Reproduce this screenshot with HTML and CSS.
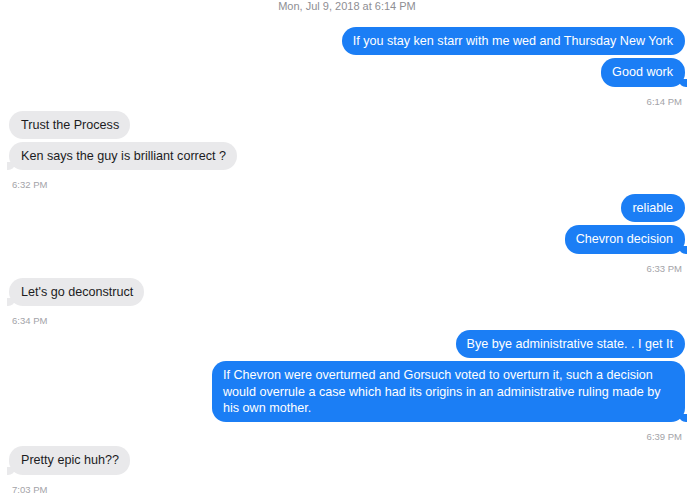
FILE: index.html
```html
<!DOCTYPE html>
<html>
<head>
<meta charset="utf-8">
<link rel="stylesheet" href="styles.css">
</head>
<body>
<div class="thread">
  <div class="date">Mon, Jul 9, 2018 at 6:14 PM</div>

  <div class="bubble sent">If you stay ken starr with me wed and Thursday New York</div>
  <div class="bubble sent tail">Good work</div>
  <div class="time sent-time">6:14 PM</div>

  <div class="bubble recv">Trust the Process</div>
  <div class="bubble recv tail">Ken says the guy is brilliant correct ?</div>
  <div class="time recv-time">6:32 PM</div>

  <div class="bubble sent">reliable</div>
  <div class="bubble sent tail">Chevron decision</div>
  <div class="time sent-time">6:33 PM</div>

  <div class="bubble recv tail">Let's go deconstruct</div>
  <div class="time recv-time">6:34 PM</div>

  <div class="bubble sent">Bye bye administrative state. . I get It</div>
  <div class="bubble sent tail">If Chevron were overturned and Gorsuch voted to overturn it, such a decision would overrule a case which had its origins in an administrative ruling made by his own mother.</div>
  <div class="time sent-time">6:39 PM</div>

  <div class="bubble recv tail">Pretty epic huh??</div>
  <div class="time recv-time">7:03 PM</div>
</div>
</body>
</html>
```

FILE: styles.css
```css
html, body {
  margin: 0;
  padding: 0;
  background: #ffffff;
}

body {
  font-family: "Liberation Sans", Arial, Helvetica, sans-serif;
  -webkit-font-smoothing: antialiased;
}

.thread {
  display: flex;
  flex-direction: column;
  gap: 3px;
  padding: 0 11px 0 9px;
}

.date {
  align-self: center;
  font-size: 11px;
  line-height: 12px;
  color: #8e8e93;
  margin-bottom: 12px;
}

.bubble {
  position: relative;
  max-width: 450px;
  padding: 6px 12px 6px 11px;
  border-radius: 14px;
  font-size: 12.6px;
  line-height: 16.3px;
}

.sent {
  align-self: flex-end;
  background: #1b7ef5;
  color: #ffffff;
}

.recv {
  align-self: flex-start;
  background: #e9e9eb;
  color: #1c1c1e;
  padding: 6px 11px 6px 12px;
}

.bubble.tail::before,
.bubble.tail::after {
  content: "";
  position: absolute;
  bottom: 0;
  height: 8px;
}

.sent.tail::before {
  right: -2px;
  width: 8px;
  background: #1b7ef5;
  border-bottom-left-radius: 7px 6px;
}

.sent.tail::after {
  right: -7px;
  width: 5px;
  background: #ffffff;
  border-bottom-left-radius: 4px;
}

.recv.tail::before {
  left: -2px;
  width: 8px;
  background: #e9e9eb;
  border-bottom-right-radius: 7px 6px;
}

.recv.tail::after {
  left: -7px;
  width: 5px;
  background: #ffffff;
  border-bottom-right-radius: 4px;
}

.time {
  font-size: 9.5px;
  line-height: 12px;
  color: #a3a3a8;
  margin-top: 6px;
}

.sent-time {
  align-self: flex-end;
  margin-right: 3px;
}

.recv-time {
  align-self: flex-start;
  margin-left: 3px;
}
```
